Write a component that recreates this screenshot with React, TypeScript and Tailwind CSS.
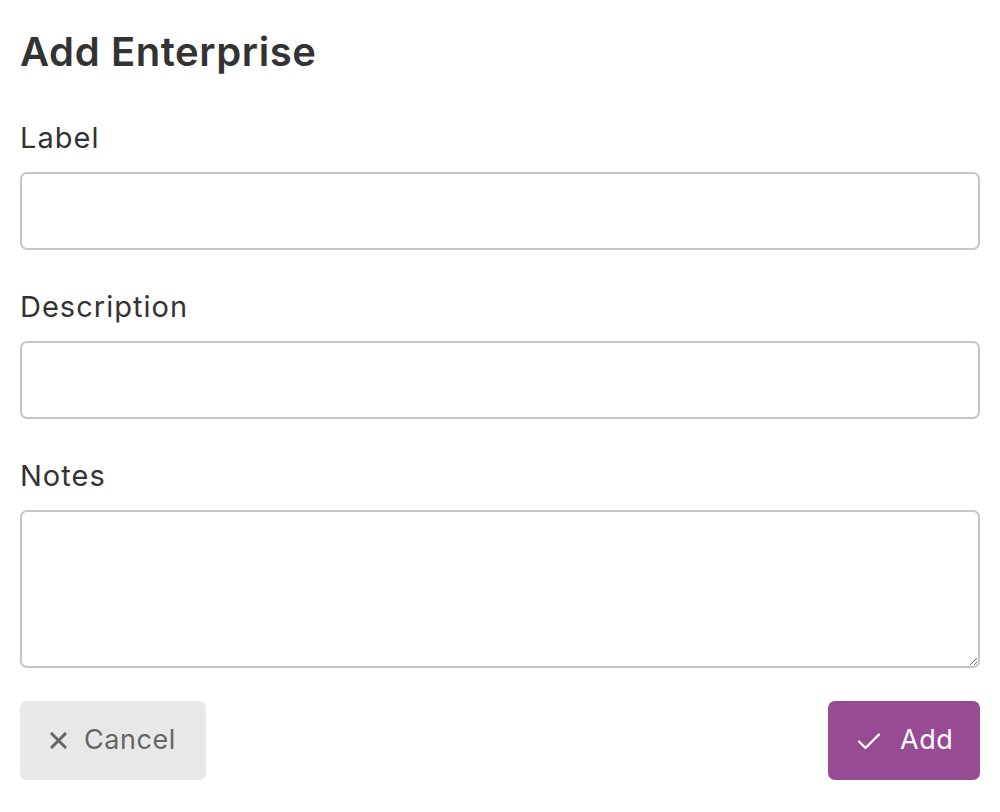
import React from 'react';

const font = { fontFamily: 'Inter, "Noto Sans", sans-serif' };

const Field = ({ label, tall }: { label: string; tall?: boolean }) => (
  <div className="flex flex-col">
    <label className="text-[29px] leading-[39px] tracking-[0.035em] text-[#333333] mb-[15px]">{label}</label>
    {tall ? (
      <textarea className="w-full h-[158px] border-2 border-[#c6c6c6] rounded-[7px] bg-white outline-none px-3 py-2 text-[24px] resize-y" />
    ) : (
      <input className="w-full h-[78px] border-2 border-[#c6c6c6] rounded-[7px] bg-white outline-none px-3 text-[24px]" />
    )}
  </div>
);

export default function App() {
  return (
    <div className="w-[1000px] h-[812px] bg-white px-[20px] pt-[28px]" style={font}>
      <h1 className="text-[40px] leading-[48px] font-semibold tracking-[0.015em] text-[#333333] mb-[42px]">Add Enterprise</h1>
      <div className="flex flex-col gap-[37px]">
        <Field label="Label" />
        <Field label="Description" />
        <Field label="Notes" tall />
      </div>
      <div className="flex justify-between mt-[33px]">
        <button className="w-[186px] h-[79px] pl-[30px] rounded-[7px] bg-[#e8e8e8] text-[#666666] text-[27px] tracking-[0.02em] flex items-center gap-[17px]">
          <svg width="17" height="17" viewBox="0 0 17 17" fill="none" stroke="#666666" strokeWidth="3" strokeLinecap="square">
            <path d="M2 2 L15 15 M15 2 L2 15" />
          </svg>
          Cancel
        </button>
        <button className="w-[152px] h-[79px] pl-[29px] rounded-[7px] bg-[#974b93] text-white text-[27px] tracking-[0.02em] flex items-center gap-[19px]">
          <svg width="24" height="18" viewBox="0 0 24 18" fill="none" stroke="#ffffff" strokeWidth="2.4" strokeLinecap="round" strokeLinejoin="round">
            <path d="M2 9.5 L8.5 16 L22 2.5" />
          </svg>
          Add
        </button>
      </div>
    </div>
  );
}
